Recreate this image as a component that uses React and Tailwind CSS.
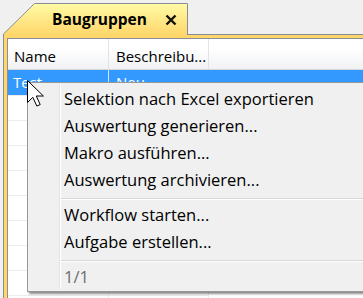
const font = { fontFamily: '"Open Sans", "Noto Sans", sans-serif' }

function Cursor() {
  return (
    <svg className="absolute left-[27px] top-[80px]" width="18" height="28" viewBox="0 0 18 28">
      <path
        d="M0.5 0.5 L0.5 22.5 L5.8 17.3 L9.8 26 L13.2 24.6 L9.3 16 L16.4 16 Z"
        fill="#fff"
        stroke="#000"
        strokeWidth="1"
      />
    </svg>
  )
}

function Tab() {
  return (
    <div className="relative ml-[3px] w-[185px] h-[35px] shrink-0">
      <svg className="absolute inset-0" width="185" height="35" viewBox="0 0 185 35">
        <defs>
          <linearGradient id="tabfill" x1="0" y1="0" x2="0" y2="1">
            <stop offset="0" stopColor="#fffba6" />
            <stop offset="1" stopColor="#ffd66b" />
          </linearGradient>
        </defs>
        <polygon points="0.5,35 0.5,34 31.5,3.5 184.5,3.5 184.5,35" fill="url(#tabfill)" />
        <polyline points="0.5,35 0.5,34 31.5,3.5 184.5,3.5 184.5,35" fill="none" stroke="#8a8d96" strokeWidth="1" />
      </svg>
      <div className="relative flex items-center h-full pl-[49px] pt-[4px]">
        <span className="text-[15.5px] font-bold text-black leading-none">Baugruppen</span>
        <svg className="ml-[18px]" width="12" height="12" viewBox="0 0 12 12">
          <path d="M1.5 1.5 L10.5 10.5 M10.5 1.5 L1.5 10.5" stroke="#111" strokeWidth="2.4" />
        </svg>
      </div>
    </div>
  )
}

function MenuItem({ children, muted }) {
  return (
    <div className={`h-[27px] shrink-0 flex items-center pl-[3px] text-[16.5px] whitespace-nowrap ${muted ? "text-[#6d6d6d]" : "text-black"}`}>
      {children}
    </div>
  )
}

function Separator() {
  return (
    <div className="h-[8px] shrink-0 pt-[4px]">
      <div className="w-full border-t border-[#d7d7d7] border-b border-b-white" />
    </div>
  )
}

export default function App() {
  const rows = [0, 1, 2, 3, 4, 5, 6, 7, 8]

  return (
    <div className="relative w-[363px] h-[298px] bg-[#f0f0f0] overflow-hidden" style={font}>
      <div className="flex">
        <Tab />
        <div className="flex-1 h-[35px] border-b border-[#8a8d96]" />
      </div>

      <div className="ml-[3px] h-[263px] border-l border-[#8a8d96] bg-[#ffd66b] pl-[3px] pt-[3px]">
        <div className="h-full border-l border-t border-[#8a8d96] bg-white">
          <div className="flex h-[31px] border-b border-[#d5d5d5] bg-[linear-gradient(#ffffff_0%,#ffffff_30%,#f1f2f4_100%)] text-[15px] text-black">
            <div className="w-[101px] border-r border-[#e3e3e3] pl-[6px] pt-[5px] flex items-center">Name</div>
            <div className="w-[100px] border-r border-[#e3e3e3] pl-[7px] pt-[5px] flex items-center">Beschreibu...</div>
          </div>

          <div className="flex h-[25px] bg-[#3399ff] text-white text-[15px]">
            <div className="w-[101px] border-r border-[#cfe6ff] pl-[5px] flex items-center">Test</div>
            <div className="w-[100px] pl-[7px] flex items-center">Neu</div>
          </div>

          {rows.map((r) => (
            <div key={r} className="flex h-[25px] border-t border-[#ececec] w-[201px]">
              <div className="w-[101px] border-r border-[#ececec]" />
              <div className="w-[100px] border-r border-[#ececec]" />
            </div>
          ))}
        </div>
      </div>

      <div className="absolute left-[27px] top-[82px] w-[345px] h-[210px] flex border border-[#979797] bg-[#f0f0f0] shadow-[2px_2px_2px_rgba(0,0,0,0.45)]">
        <div className="w-[32px] shrink-0 my-[2px] border-r border-[#e2e3e3]" />
        <div className="flex-1 flex flex-col pt-[1px] border-l border-white my-[2px]">
          <MenuItem>Selektion nach Excel exportieren</MenuItem>
          <MenuItem>Auswertung generieren...</MenuItem>
          <MenuItem>Makro ausführen...</MenuItem>
          <MenuItem>Auswertung archivieren...</MenuItem>
          <Separator />
          <MenuItem>Workflow starten...</MenuItem>
          <MenuItem>Aufgabe erstellen...</MenuItem>
          <Separator />
          <MenuItem muted>1/1</MenuItem>
        </div>
      </div>

      <Cursor />
    </div>
  )
}
